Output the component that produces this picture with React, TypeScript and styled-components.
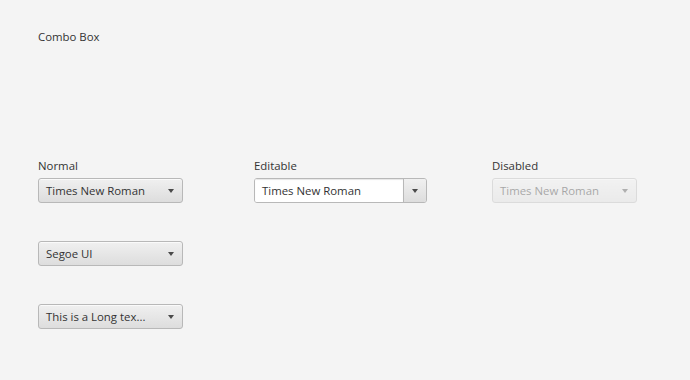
import React from "react";
import styled, { createGlobalStyle, css } from "styled-components";

const Global = createGlobalStyle`
  html, body { margin: 0; padding: 0; background: #f4f4f4; }
  body { font-family: "Open Sans", "Noto Sans", sans-serif; font-size: 11.4px; color: #333; }
`;

const Page = styled.div`
  width: 690px;
  height: 380px;
  box-sizing: border-box;
  padding: 29px 0 0 38px;
  background: #f4f4f4;
`;

const Title = styled.div`
  font-size: 11.4px;
  line-height: 16px;
  color: #333;
`;

const Grid = styled.div`
  margin-top: 113px;
  display: grid;
  grid-template-columns: 216px 238px 150px;
`;

const Column = styled.div`
  display: flex;
  flex-direction: column;
`;

const Label = styled.div`
  font-size: 11.4px;
  line-height: 16px;
  color: #333;
  margin-bottom: 4px;
`;

const Stack = styled.div`
  display: flex;
  flex-direction: column;
  gap: 38px;
`;

const Combo = styled.div<{ $width: number; $disabled?: boolean }>`
  box-sizing: border-box;
  width: ${(p) => p.$width}px;
  height: 25px;
  display: flex;
  align-items: center;
  border: 1px solid #b8b8b8;
  border-radius: 3px;
  background: linear-gradient(#f0f0f0, #dddddd);
  box-shadow: inset 0 1px 0 #fafafa;
  ${(p) =>
    p.$disabled &&
    css`
      opacity: 0.4;
    `}
`;

const ComboText = styled.span`
  flex: 1;
  padding-left: 7px;
  font-size: 11.4px;
  color: #333;
  white-space: nowrap;
  overflow: hidden;
`;

const ArrowBox = styled.span`
  width: 22px;
  height: 100%;
  display: flex;
  align-items: center;
  justify-content: center;
  flex: none;
`;

const Arrow = styled.span`
  width: 0;
  height: 0;
  border-left: 3.5px solid transparent;
  border-right: 3.5px solid transparent;
  border-top: 4px solid #4a4a4a;
`;

const EditCombo = styled.div`
  box-sizing: border-box;
  width: 173px;
  height: 25px;
  display: flex;
  border: 1px solid #b8b8b8;
  border-radius: 3px;
  overflow: hidden;
`;

const EditField = styled.div`
  flex: 1;
  display: flex;
  align-items: center;
  padding-left: 7px;
  background: #ffffff;
  box-shadow: inset 0 1px 1px #e6e6e6;
  font-size: 11.4px;
  color: #333;
`;

const EditButton = styled.div`
  width: 22px;
  display: flex;
  align-items: center;
  justify-content: center;
  border-left: 1px solid #b8b8b8;
  background: linear-gradient(#f0f0f0, #dddddd);
`;

const ComboBox = ({ text, width = 145, disabled }: { text: string; width?: number; disabled?: boolean }) => (
  <Combo $width={width} $disabled={disabled}>
    <ComboText>{text}</ComboText>
    <ArrowBox>
      <Arrow />
    </ArrowBox>
  </Combo>
);

export default function App() {
  return (
    <Page>
      <Global />
      <Title>Combo Box</Title>
      <Grid>
        <Column>
          <Label>Normal</Label>
          <Stack>
            <ComboBox text="Times New Roman" />
            <ComboBox text="Segoe UI" />
            <ComboBox text="This is a Long tex..." />
          </Stack>
        </Column>
        <Column>
          <Label>Editable</Label>
          <EditCombo>
            <EditField>Times New Roman</EditField>
            <EditButton>
              <Arrow />
            </EditButton>
          </EditCombo>
        </Column>
        <Column>
          <Label>Disabled</Label>
          <ComboBox text="Times New Roman" disabled />
        </Column>
      </Grid>
    </Page>
  );
}
